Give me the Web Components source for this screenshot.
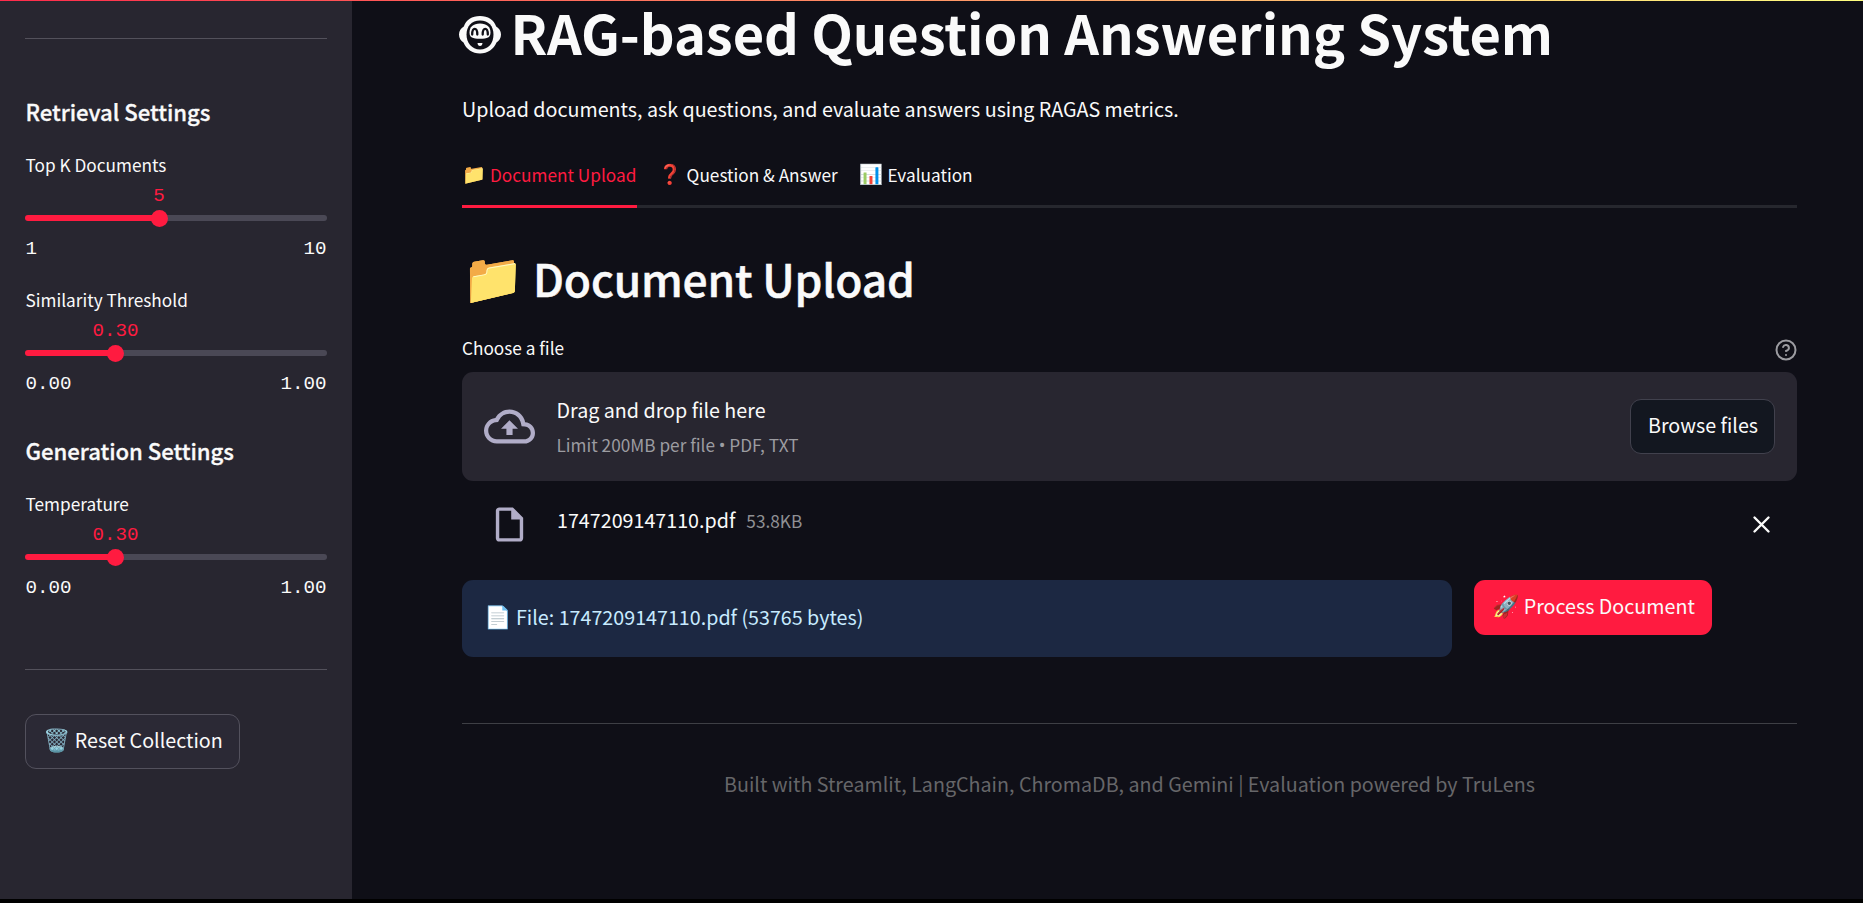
<!DOCTYPE html>
<html lang="en">
<head>
<meta charset="utf-8">
<title>RAG-based Question Answering System</title>
<style>
html,body{margin:0;background:#000}
body{font-family:"Noto Sans CJK SC","Noto Sans",sans-serif;color:#fafafa}
</style>
</head>
<body>
<rag-app></rag-app>
<script>
const define=(name,css,html,setup)=>customElements.define(name,class extends HTMLElement{
  connectedCallback(){
    if(this.shadowRoot)return;
    const root=this.attachShadow({mode:'open'});
    const t=document.createElement('template');
    t.innerHTML='<style>*{box-sizing:border-box}'+css+'</style>'+(typeof html==='function'?html(this):html);
    root.append(t.content.cloneNode(true));
    if(setup)setup(this,root);
  }
});

define('emoji-icon',`:host{display:inline-flex;flex:none;align-items:center;justify-content:center;width:var(--ew,27px);height:var(--eh,28px);font-family:"Noto Color Emoji";font-size:var(--es,22px);line-height:1;white-space:nowrap}`,'<slot></slot>');

define('rule-line',`:host{display:block;height:1px;background:var(--c,#53515b)}`,'');

define('side-heading',`:host{display:block;height:30px;line-height:30px;font-size:22.15px;font-weight:500;white-space:nowrap;padding-left:.5px;letter-spacing:-.04px;-webkit-text-stroke:.3px}`,'<slot></slot>');

define('slider-field',`:host{display:block;height:113px}
.label{height:29px;line-height:29px;font-size:17.23px;margin-bottom:3px;padding-left:.5px}
.val,.ends{font:19.2px/28px "Liberation Mono",monospace;height:28px}
.val{color:#ff1b40;width:60px;text-align:center;margin-left:calc(var(--p) - 30px)}
.track{height:6px;margin:5px 0 14px;border-radius:3px;display:flex;align-items:center;background:linear-gradient(to right,#ff1b40 var(--p),#4a4855 var(--p))}
.thumb{width:17px;height:17px;border-radius:50%;background:#ff1b40;margin-left:calc(var(--p) - 8.5px);flex:none}
.ends{display:flex;justify-content:space-between;padding:0 .5px}`,
el=>`<div class="label">${el.getAttribute('label')}</div><div class="val">${el.getAttribute('value')}</div><div class="track"><div class="thumb"></div></div><div class="ends"><span>${el.getAttribute('min')}</span><span>${el.getAttribute('max')}</span></div>`,
el=>el.style.setProperty('--p',el.getAttribute('at')+'px'));

define('app-button',`:host{display:flex;flex:none;align-items:center;height:55px;width:var(--w);border:1px solid var(--bc,transparent);border-radius:11px;background:var(--bg);font-size:19.7px;line-height:32px;white-space:nowrap;padding:0 0 4px 17px}
slot[name=icon]::slotted(*){margin:2px 4px 0 .7px}`,'<slot name="icon"></slot><span><slot></slot></span>');

define('side-bar',`:host{display:block;width:352px;background:#282630;padding:38px 25px 0;height:899px;flex:none}
side-heading{margin-bottom:24px}`,`
<rule-line></rule-line>
<side-heading style="margin-top:57px">Retrieval Settings</side-heading>
<slider-field label="Top K Documents" value="5" min="1" max="10" at="134"></slider-field>
<slider-field style="margin-top:22px" label="Similarity Threshold" value="0.30" min="0.00" max="1.00" at="90.6"></slider-field>
<side-heading style="margin-top:37px">Generation Settings</side-heading>
<slider-field label="Temperature" value="0.30" min="0.00" max="1.00" at="90.6"></slider-field>
<rule-line style="margin-top:67px"></rule-line>
<app-button style="margin-top:44px;--w:215px;--bg:#2b2935;--bc:#53515d"><emoji-icon slot="icon">🗑️</emoji-icon>Reset Collection</app-button>`);

define('page-title',`:host{display:flex;align-items:flex-start;height:63px;line-height:63px;font-size:54.2px;font-weight:700;white-space:nowrap;letter-spacing:-.05px}
svg{width:42px;height:38px;margin:16px 9.500px 0 -3px;flex:none}`,`
<svg viewBox="0 0 42 38"><path fill="#fafafa" d="M21 0C13 0 7 4 4.800 10.500C2 12 0 15 0 18.500S1.800 25 4.500 26.500C7 33 13.500 37.500 21 37.500S35 33 37.500 26.500C40.200 25 42 22 42 18.500S40 12 37.200 10.500C35 4 29 0 21 0Z"/><path fill="#0f0f17" d="M21 4.500C12.500 4.500 7.500 10.500 7.500 18.500S12.500 33.500 21 33.500S34.500 27 34.500 18.500S29.500 4.500 21 4.500Z"/><path fill="#fafafa" d="M21 7.500C14 7.500 10.500 11 10.500 16.500C10.500 21.500 13.500 22.800 21 22.800S31.500 21.500 31.500 16.500C31.500 11 28 7.500 21 7.500Z"/><path fill="none" stroke="#0f0f17" stroke-width="2.300" stroke-linecap="round" d="M13.200 18.500C13.200 11 18.300 11 18.300 18.500M23.700 18.500C23.700 11 28.800 11 28.800 18.500"/><path fill="#fafafa" d="M18.500 27h5q-.3 3-2.500 3t-2.500-3Z"/></svg><span><slot></slot></span>`);

define('tab-item',`:host{display:flex;align-items:center;height:48px;padding-bottom:17px;font-size:17.23px;line-height:29px;white-space:nowrap;width:var(--w);border-bottom:3px solid transparent}
:host([active]){color:#ff1b40;border-color:#ff1b40}
emoji-icon{--es:19.25px;--ew:24px;margin:2px 4px 0 0}`,el=>`<emoji-icon>${el.getAttribute('icon')}</emoji-icon><span><slot></slot></span>`);

define('tab-bar',`:host{display:flex;gap:22px;height:48px;background:linear-gradient(#26272e,#26272e) bottom/100% 3px no-repeat}`,'<slot></slot>');

define('file-dropzone',`:host{display:flex;height:109px;background:#282630;border-radius:11px;padding:0 22px;align-items:center}
svg{width:51px;height:51px;flex:none;margin:-1px 21.500px 0 0}
.txt{flex:1;height:109px;padding-top:22px}
.a{height:32px;font-size:19.7px;line-height:32px}.b{margin-top:4px;font-size:17.23px;line-height:29px;color:#9c9ca1}
i{font:20px/20px Roboto;margin:0 -.1px}`,`
<svg viewBox="0 0 24 24" fill="#b1adc8"><path d="M19.350 10.040A7.490 7.490 0 0 0 12 4C9.110 4 6.600 5.640 5.350 8.040A5.994 5.994 0 0 0 0 14c0 3.310 2.690 6 6 6h13c2.760 0 5-2.240 5-5 0-2.640-2.050-4.780-4.650-4.960zM19 18H6c-2.210 0-4-1.790-4-4 0-2.050 1.530-3.760 3.560-3.970l1.070-.11.5-.95A5.469 5.469 0 0 1 12 6c2.620 0 4.880 1.860 5.390 4.430l.3 1.500 1.530.11A2.980 2.980 0 0 1 22 15c0 1.650-1.350 3-3 3zM8 13h2.550v3h2.900v-3H16l-4-4z"/></svg>
<div class="txt"><div class="a">Drag and drop file here</div><div class="b">Limit 200MB per file <i>•</i> PDF, TXT</div></div>
<app-button style="--w:145px;--bg:#131720;--bc:#41414d">Browse files</app-button>`);

define('file-row',`:host{display:flex;height:60px;padding:0 22px;align-items:center}
.doc{width:41px;height:41px;margin:9px 27px 0 5px;flex:none}
.name{font-size:19.7px;line-height:32px}.size{font-size:17.23px;line-height:32px;color:#8f9094;margin:1px 0 0 11px;flex:1}
.x{width:33px;height:33px;margin:9px -3px 0 0}`,`
<svg class="doc" viewBox="0 0 24 24" fill="#b1adc8"><path d="M14 2H6c-1.100 0-1.990.9-1.990 2L4 20c0 1.100.89 2 1.990 2H18c1.100 0 2-.9 2-2V8l-6-6zM6 20V4h7v5h5v11H6z"/></svg>
<span class="name">1747209147110.pdf</span><span class="size">53.8KB</span>
<svg class="x" viewBox="0 0 33 33"><path d="M9.500 9.500l14 14m0-14l-14 14" stroke="#fafafa" stroke-width="2.400" stroke-linecap="round"/></svg>`);

define('info-box',`:host{display:flex;width:990px;height:77px;border-radius:11px;background:#1c2842;color:#c7ebff;padding:21px 22px 0;font-size:19.7px;line-height:32px}
emoji-icon{--eh:32px;margin:1px 4.500px 0 .5px}`,'<emoji-icon>📄</emoji-icon><span><slot></slot></span>');

define('field-label',`:host{display:flex;justify-content:space-between;height:29px;font-size:17.23px;line-height:29px}svg{width:24px;height:24px;margin:5px -1px 0 0}`,`
<span><slot></slot></span><svg viewBox="0 0 24 24" fill="none" stroke="#9c9ca1" stroke-width="2" stroke-linecap="round" stroke-linejoin="round"><circle cx="12" cy="12" r="9.500"/><path d="M9.090 9a3 3 0 0 1 5.830 1c0 2-3 3-3 3M12 17h.01"/></svg>`);

define('page-footer',`:host{display:block;text-align:center;font-size:19.7px;line-height:32px;color:#666669}`,'<slot></slot>');

define('main-view',`:host{display:block;flex:1;height:899px;background:#0f0f17;padding:0 66px 0 110px}
.p{margin-top:30px;font-size:19.7px;line-height:32px}
.h2{display:flex;margin-top:40px;height:60px;line-height:60px;font-size:44.3px;font-weight:500;letter-spacing:-.15px;align-items:center;-webkit-text-stroke:.5px}
.h2 emoji-icon{--es:49.5px;--ew:61px;--eh:60px;margin:4px 9px 0 1px}
.row{display:flex;gap:22px;margin-top:30px}`,`
<page-title>RAG-based Question Answering System</page-title>
<div class="p">Upload documents, ask questions, and evaluate answers using RAGAS metrics.</div>
<tab-bar style="margin-top:35px"><tab-item active icon="📁" style="--w:175px">Document Upload</tab-item><tab-item icon="❓" style="--w:178.800px;margin-left:-.4px">Question &amp; Answer</tab-item><tab-item icon="📊">Evaluation</tab-item></tab-bar>
<div class="h2"><emoji-icon>📁</emoji-icon><span>Document Upload</span></div>
<field-label style="margin-top:25px">Choose a file</field-label>
<file-dropzone style="margin-top:10px"></file-dropzone>
<file-row style="margin-top:9px"></file-row>
<div class="row"><info-box>File: 1747209147110.pdf (53765 bytes)</info-box><app-button style="--w:238px;--bg:#ff1b40"><emoji-icon slot="icon">🚀</emoji-icon>Process Document</app-button></div>
<rule-line style="margin-top:66px;--c:#3e3f45"></rule-line>
<page-footer style="margin-top:44px">Built with Streamlit, LangChain, ChromaDB, and Gemini | Evaluation powered by TruLens</page-footer>`);

define('rag-app',`:host{display:flex;height:903px;background:#000;position:relative;align-items:flex-start}
.deco{position:absolute;top:0;left:0;right:0;height:1px;background:linear-gradient(to right,#ff2b4b,#ffff80)}`,'<side-bar></side-bar><main-view></main-view><div class="deco"></div>');
</script>
</body>
</html>
